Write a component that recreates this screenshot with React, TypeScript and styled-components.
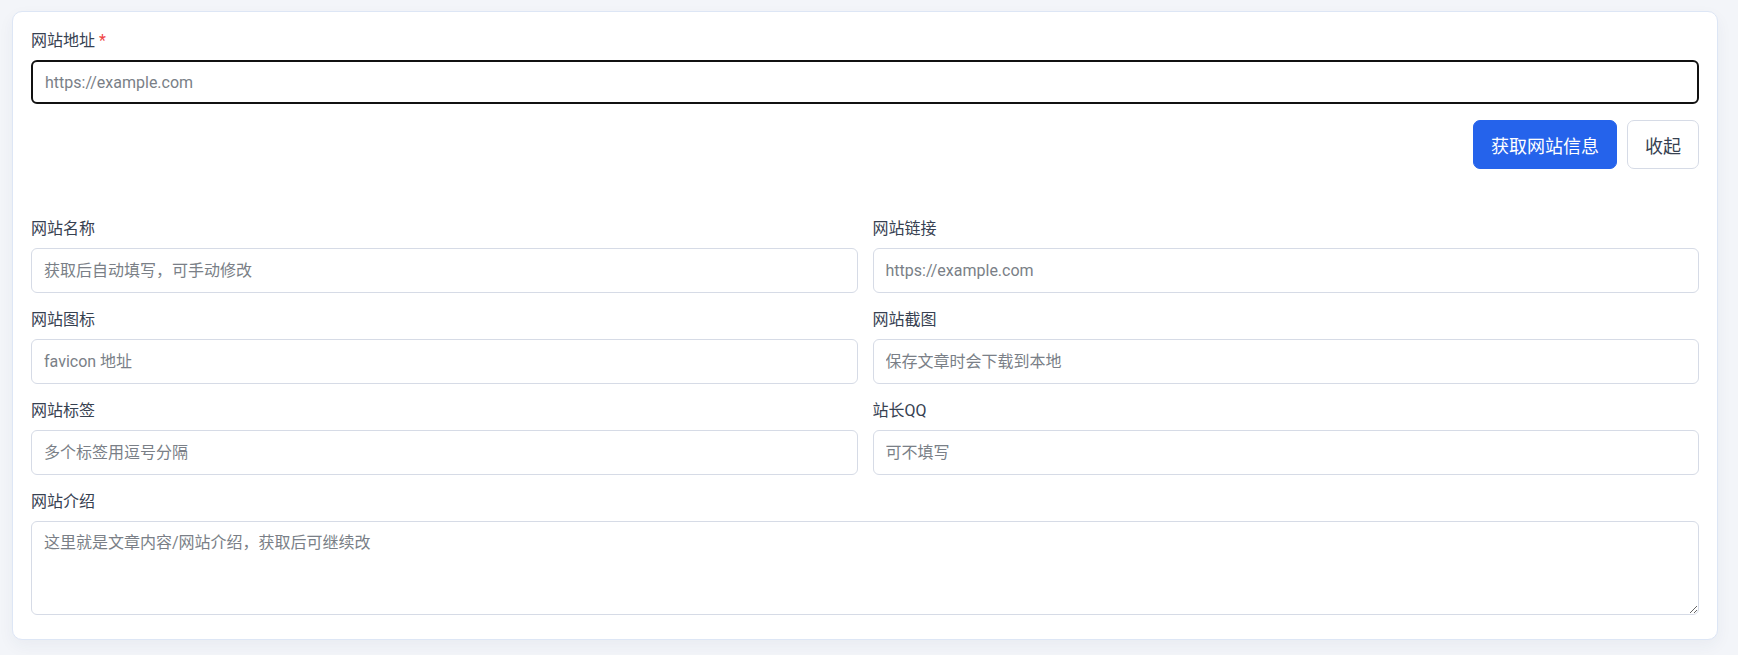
import styled, { createGlobalStyle } from "styled-components"

const GlobalStyle = createGlobalStyle`
  * {
    box-sizing: border-box;
  }

  body {
    margin: 0;
    background: #f3f5f9;
    font-family: Roboto, "Noto Sans CJK SC", sans-serif;
  }
`

type Field = {
  label: string
  placeholder: string
}

const fields: Field[] = [
  { label: "网站名称", placeholder: "获取后自动填写，可手动修改" },
  { label: "网站链接", placeholder: "https://example.com" },
  { label: "网站图标", placeholder: "favicon 地址" },
  { label: "网站截图", placeholder: "保存文章时会下载到本地" },
  { label: "网站标签", placeholder: "多个标签用逗号分隔" },
  { label: "站长QQ", placeholder: "可不填写" },
]

const App = () => {
  return (
    <StyledPage>
      <GlobalStyle />
      <StyledCard>
        <StyledField>
          <StyledLabel>
            网站地址 <StyledRequired>*</StyledRequired>
          </StyledLabel>
          <StyledInput $focused autoFocus placeholder="https://example.com" />
        </StyledField>

        <StyledActions>
          <StyledButton $primary>获取网站信息</StyledButton>
          <StyledButton>收起</StyledButton>
        </StyledActions>

        <StyledGrid>
          {fields.map((field) => (
            <StyledField key={field.label}>
              <StyledLabel>{field.label}</StyledLabel>
              <StyledInput placeholder={field.placeholder} />
            </StyledField>
          ))}
          <StyledField $wide>
            <StyledLabel>网站介绍</StyledLabel>
            <StyledTextarea placeholder="这里就是文章内容/网站介绍，获取后可继续改" />
          </StyledField>
        </StyledGrid>
      </StyledCard>
    </StyledPage>
  )
}

const StyledPage = styled.div`
  min-height: 655px;
  padding: 11px 20px 16px 12px;
`

const StyledCard = styled.section`
  background: #ffffff;
  border: 1px solid #dde6f5;
  border-radius: 10px;
  padding: 18px 18px 24px;
  box-shadow: 0 6px 16px rgba(30, 50, 90, 0.05);
`

const StyledField = styled.div<{ $wide?: boolean }>`
  display: flex;
  flex-direction: column;
  grid-column: ${({ $wide }) => ($wide ? "1 / -1" : "auto")};
`

const StyledLabel = styled.label`
  font-size: 16px;
  line-height: 22px;
  color: #374151;
  margin-bottom: 8px;
`

const StyledRequired = styled.span`
  color: #ef4444;
`

const StyledInput = styled.input<{ $focused?: boolean }>`
  height: ${({ $focused }) => ($focused ? "44px" : "45px")};
  padding: 0 12px;
  border: ${({ $focused }) =>
    $focused ? "2px solid #111111" : "1px solid #d6dbe6"};
  border-radius: 6px;
  background: #ffffff;
  font-family: inherit;
  font-size: 16px;
  color: #1f2937;
  outline: none;

  &::placeholder {
    color: #7a7f87;
  }
`

const StyledTextarea = styled.textarea`
  height: 94px;
  padding: 10px 12px;
  border: 1px solid #d6dbe6;
  border-radius: 6px;
  font-family: inherit;
  font-size: 16px;
  line-height: 22px;
  color: #1f2937;
  resize: vertical;
  outline: none;

  &::placeholder {
    color: #7a7f87;
  }
`

const StyledActions = styled.div`
  display: flex;
  justify-content: flex-end;
  gap: 10px;
  margin-top: 16px;
`

const StyledButton = styled.button<{ $primary?: boolean }>`
  height: 49px;
  padding: 0 17px;
  border-radius: 7px;
  border: 1px solid ${({ $primary }) => ($primary ? "#2563eb" : "#d6dbe6")};
  background: ${({ $primary }) => ($primary ? "#2563eb" : "#ffffff")};
  color: ${({ $primary }) => ($primary ? "#ffffff" : "#374151")};
  font-family: inherit;
  font-size: 18px;
  cursor: pointer;
`

const StyledGrid = styled.div`
  display: grid;
  grid-template-columns: 1fr 1fr;
  column-gap: 15px;
  row-gap: 16px;
  margin-top: 49px;
`

export default App
